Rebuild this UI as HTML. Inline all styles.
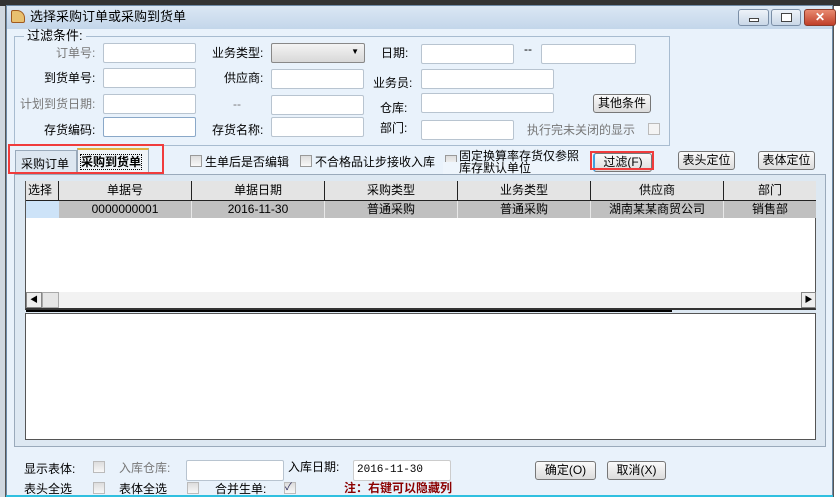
<!DOCTYPE html>
<html><head><meta charset="utf-8"><style>
*{margin:0;padding:0;box-sizing:border-box}
body{width:840px;height:497px;overflow:hidden;background:#fff;font-family:"Liberation Sans","Noto Sans CJK SC",sans-serif;font-size:12px;color:#000;position:relative}
.a{position:absolute;white-space:nowrap}
.in{position:absolute;background:#fff;border:1px solid #b8c4d0;border-radius:2px;height:20px}
.lb{position:absolute;white-space:nowrap;font-size:12px;line-height:14px}
.g{color:#777}
.cb{position:absolute;width:12px;height:12px;border:1px solid #999;background:linear-gradient(#ddd,#f8f8f8)}
.btn{position:absolute;border:1px solid #777;border-radius:3px;background:linear-gradient(#fafafa,#dcdcdc);text-align:center;font-size:12px;line-height:16px;height:19px}
.hd{position:absolute;top:181px;height:19px;background:#e4e4e4;border-right:1px solid #222;text-align:center;line-height:19px}
.rw{position:absolute;top:201px;height:17px;background:#c0c0c0;border-right:1px solid #e8e8e8;text-align:center;line-height:17px}
</style></head><body>
<div class="a" style="left:0;top:0;width:840px;height:6px;background:#333"></div>
<div class="a" style="left:0;top:6px;width:6px;height:491px;background:#d0d8e0;border-right:1px solid #555"></div>
<div class="a" style="left:833px;top:6px;width:7px;height:491px;background:#fff;border-left:1px solid #555"></div>
<div class="a" style="left:6px;top:5px;width:827px;height:492px;background:#e9f2fb;border:1px solid #6e8aa6"></div>
<div class="a" style="left:7px;top:6px;width:825px;height:23px;background:linear-gradient(#dbe7f4,#c3d6ea)"></div>
<div class="a" style="left:11px;top:10px;width:14px;height:13px;background:#e8c070;border:1px solid #a05a20;border-radius:2px 8px 2px 2px"></div>
<div class="lb" style="left:30px;top:10px;font-size:13px">选择采购订单或采购到货单</div>
<div class="a" style="left:738px;top:9px;width:31px;height:17px;border:1px solid #7a8ea6;border-radius:3px;background:linear-gradient(#eef3f9,#c9d7e7)"><div class="a" style="left:10px;top:8px;width:10px;height:4px;border:1px solid #444;background:#fff"></div></div>
<div class="a" style="left:771px;top:9px;width:30px;height:17px;border:1px solid #7a8ea6;border-radius:3px;background:linear-gradient(#eef3f9,#c9d7e7)"><div class="a" style="left:9px;top:3px;width:11px;height:9px;border:1px solid #444;background:#fff"></div></div>
<div class="a" style="left:804px;top:9px;width:32px;height:17px;border:1px solid #8a3a2a;border-radius:3px;background:linear-gradient(#e88a70,#c0402a);color:#fff;font-weight:bold;text-align:center;line-height:15px">✕</div>
<div class="a" style="left:14px;top:36px;width:656px;height:110px;border:1px solid #a8bcd0"></div>
<div class="lb" style="left:24px;top:29px;background:#e9f2fb;padding:0 3px;font-size:13px">过滤条件:</div>
<div class="lb g" style="left:56px;top:46px">订单号:</div><div class="in" style="left:103px;top:43px;width:93px"></div>
<div class="lb" style="left:212px;top:46px">业务类型:</div>
<div class="in" style="left:271px;top:43px;width:94px;background:linear-gradient(#f4f4f4,#d8d8d8);border-color:#888"><span class="a" style="right:5px;top:3px;font-size:8px">▼</span></div>
<div class="lb" style="left:381px;top:46px">日期:</div><div class="in" style="left:421px;top:44px;width:93px"></div>
<div class="lb" style="left:524px;top:42px">--</div><div class="in" style="left:541px;top:44px;width:95px"></div>
<div class="lb" style="left:44px;top:71px">到货单号:</div><div class="in" style="left:103px;top:68px;width:93px"></div>
<div class="lb" style="left:224px;top:71px">供应商:</div><div class="in" style="left:271px;top:69px;width:93px"></div>
<div class="lb" style="left:373px;top:76px">业务员:</div><div class="in" style="left:421px;top:69px;width:133px"></div>
<div class="lb g" style="left:20px;top:97px">计划到货日期:</div><div class="in" style="left:103px;top:94px;width:93px"></div>
<div class="lb g" style="left:233px;top:97px">--</div><div class="in" style="left:271px;top:95px;width:93px"></div>
<div class="lb" style="left:380px;top:101px">仓库:</div><div class="in" style="left:421px;top:93px;width:133px"></div>
<div class="btn" style="left:593px;top:94px;width:58px">其他条件</div>
<div class="lb" style="left:44px;top:123px">存货编码:</div><div class="in" style="left:103px;top:117px;width:93px;border-color:#8aa8c8"></div>
<div class="lb" style="left:212px;top:123px">存货名称:</div><div class="in" style="left:271px;top:117px;width:93px"></div>
<div class="lb" style="left:380px;top:121px">部门:</div><div class="in" style="left:421px;top:120px;width:93px"></div>
<div class="lb g" style="left:527px;top:123px">执行完未关闭的显示</div>
<div class="cb" style="left:648px;top:123px;background:#f4f4f4;border-color:#bbb"></div>
<div class="a" style="left:15px;top:150px;width:62px;height:23px;background:#dde7f1;border:1px solid #9aaabb;border-bottom:none"></div>
<div class="lb" style="left:21px;top:157px">采购订单</div>
<div class="a" style="left:77px;top:148px;width:72px;height:25px;background:#f0f4f8;border:1px solid #9aaabb;border-top:2px solid #e0b040;border-bottom:none"></div>
<div class="lb" style="left:81px;top:155px;font-weight:bold;outline:1px dotted #000">采购到货单</div>
<div class="a" style="left:8px;top:144px;width:156px;height:30px;border:2px solid #f03c3c"></div>
<div class="cb" style="left:190px;top:155px"></div><div class="lb" style="left:205px;top:155px">生单后是否编辑</div>
<div class="cb" style="left:300px;top:155px"></div><div class="lb" style="left:315px;top:155px">不合格品让步接收入库</div>
<div class="cb" style="left:445px;top:155px"></div>
<div class="a" style="left:443px;top:162px;width:137px;height:12px;background:#eef5fc"></div>
<div class="lb" style="left:459px;top:150px;line-height:12px">固定换算率存货仅参照<br>库存默认单位</div>
<div class="btn" style="left:593px;top:153px;width:59px;border-left:2px solid #40a0e0">过滤(F)</div>
<div class="a" style="left:590px;top:151px;width:64px;height:19px;border:2px solid #f03c3c"></div>
<div class="btn" style="left:678px;top:151px;width:57px">表头定位</div>
<div class="btn" style="left:758px;top:151px;width:57px">表体定位</div>
<div class="a" style="left:14px;top:174px;width:812px;height:273px;background:#dde8f2;border:1px solid #9aaabb"></div>
<div class="a" style="left:25px;top:181px;width:791px;height:129px;background:#fff;border:1px solid #555;border-bottom:2px solid #333"></div>
<div class="hd" style="left:26px;width:33px;text-align:left;padding-left:2px">选择</div>
<div class="hd" style="left:59px;width:133px">单据号</div>
<div class="hd" style="left:192px;width:133px">单据日期</div>
<div class="hd" style="left:325px;width:133px">采购类型</div>
<div class="hd" style="left:458px;width:133px">业务类型</div>
<div class="hd" style="left:591px;width:133px">供应商</div>
<div class="hd" style="left:724px;width:92px;border-right:none">部门</div>
<div class="a" style="left:26px;top:200px;width:790px;height:1px;background:#222"></div>
<div class="a" style="left:26px;top:201px;width:33px;height:17px;background:#cde3f8"></div>
<div class="rw" style="left:59px;width:133px">0000000001</div>
<div class="rw" style="left:192px;width:133px">2016-11-30</div>
<div class="rw" style="left:325px;width:133px">普通采购</div>
<div class="rw" style="left:458px;width:133px">普通采购</div>
<div class="rw" style="left:591px;width:133px">湖南某某商贸公司</div>
<div class="rw" style="left:724px;width:92px;border-right:none">销售部</div>
<div class="a" style="left:26px;top:292px;width:790px;height:16px;background:#f2f2f2"></div>
<div class="a" style="left:26px;top:292px;width:16px;height:16px;background:#eee;border:1px solid #888;font-size:8px;text-align:center;line-height:14px">◀</div>
<div class="a" style="left:42px;top:292px;width:17px;height:16px;background:#e6e6e6;border:1px solid #aaa"></div>
<div class="a" style="left:801px;top:292px;width:15px;height:16px;background:#eee;border:1px solid #888;font-size:8px;text-align:center;line-height:14px">▶</div>
<div class="a" style="left:26px;top:310px;width:646px;height:2px;background:#000"></div>
<div class="a" style="left:25px;top:313px;width:791px;height:127px;background:#fff;border:1px solid #555"></div>
<div class="lb" style="left:24px;top:462px">显示表体:</div><div class="cb" style="left:93px;top:461px;border-color:#bbb"></div>
<div class="lb g" style="left:119px;top:461px">入库仓库:</div><div class="in" style="left:186px;top:460px;width:98px;height:21px"></div>
<div class="lb" style="left:288px;top:460px">入库日期:</div>
<div class="in" style="left:353px;top:460px;width:98px;height:21px;border-color:#ccc;font-family:'Liberation Mono',monospace;font-size:11px;line-height:18px;padding-left:3px">2016-11-30</div>
<div class="btn" style="left:535px;top:461px;width:61px">确定(O)</div>
<div class="btn" style="left:607px;top:461px;width:59px">取消(X)</div>
<div class="lb" style="left:24px;top:482px">表头全选</div><div class="cb" style="left:93px;top:482px;border-color:#bbb"></div>
<div class="lb" style="left:119px;top:482px">表体全选</div><div class="cb" style="left:187px;top:482px;border-color:#bbb"></div>
<div class="lb" style="left:215px;top:482px">合并生单:</div><div class="cb" style="left:284px;top:482px;border-color:#bbb;font-size:10px;line-height:10px;color:#225">✓</div>
<div class="lb" style="left:344px;top:481px;color:#8b0000;font-weight:bold">注：右键可以隐藏列</div>
<div class="a" style="left:6px;top:495px;width:827px;height:2px;background:#30c0e0"></div>
</body></html>
